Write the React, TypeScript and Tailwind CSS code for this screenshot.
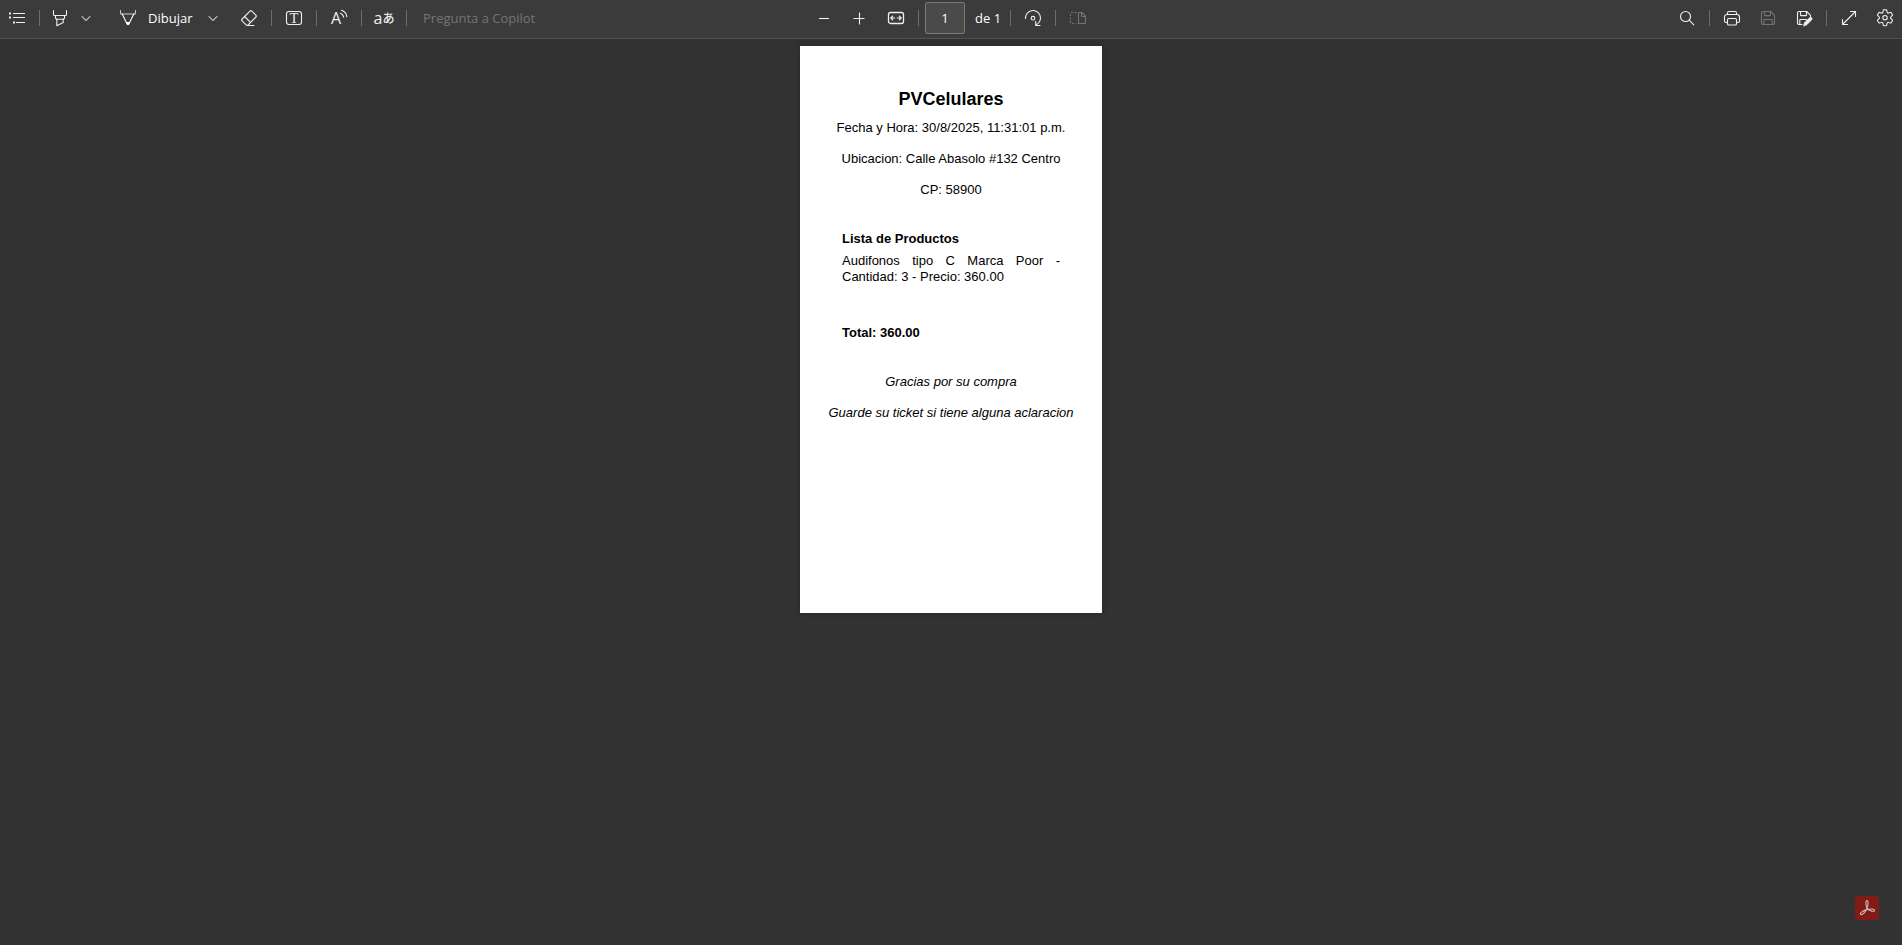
import { useState, type ReactNode } from "react";

function Icon({ children, className = "" }: { children: ReactNode; className?: string }) {
  return (
    <svg
      viewBox="0 0 18 18"
      fill="none"
      stroke="currentColor"
      strokeWidth="1.1"
      strokeLinecap="round"
      strokeLinejoin="round"
      aria-hidden="true"
      className={`size-[18px] shrink-0 overflow-visible ${className}`}
    >
      {children}
    </svg>
  );
}

function ToolButton({
  label,
  children,
  className = "w-8",
  disabled = false,
}: {
  label: string;
  children: ReactNode;
  className?: string;
  disabled?: boolean;
}) {
  return (
    <button
      type="button"
      aria-label={label}
      disabled={disabled}
      className={`flex h-8 shrink-0 items-center justify-center text-[#f0f0f0] disabled:text-[#747474] ${className}`}
    >
      {children}
    </button>
  );
}

function Separator() {
  return <span className="mx-1.5 h-4 w-px shrink-0 bg-[#6e6e6e]" />;
}

function Chevron() {
  return (
    <Icon className="text-[#b4b4b4]">
      <path d="M5 7.500l4 4 4-4" />
    </Icon>
  );
}

function FloppyShape() {
  return (
    <>
      <path d="M2.500 4A1.500 1.500 0 0 1 4 2.500h7.700l3.800 3.800V14a1.500 1.500 0 0 1-1.500 1.500H4A1.500 1.500 0 0 1 2.500 14z" />
      <path d="M5.500 2.500v3.500a.6.6 0 0 0 .6.6h4.800a.6.6 0 0 0 .6-.6V2.500M4.800 15.500v-4.400a.6.6 0 0 1 .6-.6h7.200a.6.6 0 0 1 .6.6v4.400" />
    </>
  );
}

function LeftTools() {
  return (
    <div className="flex items-center pl-px">
      <ToolButton label="Tabla de contenido">
        <Icon>
          <path d="M5 4.500h12M5 8.500h12M8 13.500h9" strokeLinecap="butt" />
          <path d="M1 4.500h2M1 8.500h2M5 13.500h2" strokeWidth="1.800" strokeLinecap="butt" />
        </Icon>
      </ToolButton>
      <Separator />
      <ToolButton label="Resaltar" className="w-7">
        <Icon>
          <path d="M2.500 1.500v4a1 1 0 0 0 1 1h11a1 1 0 0 0 1-1v-4" />
          <path d="M4.500 6.500v2.200a1.500 1.500 0 0 0 1.500 1.500h6a1.500 1.500 0 0 0 1.500-1.500V6.500" />
          <path d="M5.800 10.200v6.600l6.400-3.200v-3.400" />
        </Icon>
      </ToolButton>
      <ToolButton label="Opciones de resaltado" className="ml-0.5 w-5">
        <Chevron />
      </ToolButton>
      <button
        type="button"
        className="ml-4 flex h-8 w-[91px] items-center gap-3 pl-[7px] text-[13px] leading-4 font-medium text-white"
      >
        <Icon className="-mr-px">
          <path d="M1.500 1.500v2.800a.7.7 0 0 0 .7.7h13.600a.7.7 0 0 0 .7-.7V1.500" strokeOpacity=".75" />
          <path d="M3.200 5l4.900 9.900a1 1 0 0 0 1.800 0L14.800 5" />
          <path d="M7 13h4l-1.100 2.500a1 1 0 0 1-1.800 0z" fill="currentColor" stroke="none" />
        </Icon>
        <span>Dibujar</span>
      </button>
      <ToolButton label="Opciones de dibujo" className="w-5">
        <Chevron />
      </ToolButton>
      <ToolButton label="Borrar" className="ml-2.5 w-8">
        <Icon>
          <path d="M10 2.100a1.300 1.300 0 0 1 1.800 0l4.100 4.100a1.300 1.300 0 0 1 0 1.800l-7.700 7.800a1.500 1.500 0 0 1-2.100 0l-4-4a1.300 1.300 0 0 1 0-1.800z" />
          <path d="M4.600 7.500l5.900 5.900M7.500 16.500h6.500" />
        </Icon>
      </ToolButton>
      <Separator />
      <ToolButton label="Agregar texto">
        <Icon>
          <rect x="1.500" y="2.500" width="15" height="13" rx="2.500" />
          <text
            x="9"
            y="14"
            textAnchor="middle"
            fontSize="14"
            fill="currentColor"
            stroke="none"
            className="font-['Liberation_Serif',serif]"
          >
            T
          </text>
        </Icon>
      </ToolButton>
      <Separator />
      <ToolButton label="Leer en voz alta">
        <Icon>
          <text
            x="1"
            y="15"
            fontSize="16"
            fill="currentColor"
            stroke="none"
            className="font-['Open_Sans',sans-serif]"
          >
            A
          </text>
          <path d="M10.500 4.200c1.700.7 2.900 2 3.200 4M11.500 1.300c3 1 4.900 3.300 5.300 6.300" />
        </Icon>
      </ToolButton>
      <Separator />
      <ToolButton label="Traducir">
        <span className="flex items-center leading-4">
          <span className="font-['Open_Sans',sans-serif] text-[16px]">a</span>
          <span className="font-['Noto_Sans_CJK_JP',sans-serif] text-[12px] font-medium">あ</span>
        </span>
      </ToolButton>
      <Separator />
      <input
        type="text"
        aria-label="Pregunta a Copilot"
        placeholder="Pregunta a Copilot"
        className="ml-2.5 h-8 w-40 min-w-0 bg-transparent text-[13px] text-white outline-none placeholder:text-[#747474]"
      />
    </div>
  );
}

function CenterTools() {
  const [page, setPage] = useState("1");
  return (
    <div className="flex items-center">
      <ToolButton label="Alejar">
        <Icon>
          <path d="M4 9.500h10" strokeLinecap="butt" />
        </Icon>
      </ToolButton>
      <ToolButton label="Acercar" className="ml-[3px] w-8">
        <Icon>
          <path d="M3.500 9.500h11M9.500 3.500v12" strokeLinecap="butt" />
        </Icon>
      </ToolButton>
      <ToolButton label="Ajustar al ancho" className="ml-[5px] w-8">
        <Icon>
          <rect x="1.500" y="3.500" width="15" height="11" rx="2" strokeWidth="1.300" />
          <path d="M3.800 9h3.900M10.300 9h3.900M5.700 7.100L3.800 9l1.900 1.900M12.300 7.100L14.200 9l-1.900 1.900" strokeWidth="1.200" />
        </Icon>
      </ToolButton>
      <Separator />
      <input
        type="text"
        aria-label="Número de página"
        value={page}
        onChange={(e) => setPage(e.target.value)}
        className="h-8 w-10 rounded-xs border border-[#7a7a7a] bg-[#4a4a4a] text-center text-[13px] text-white outline-none"
      />
      <span className="ml-2.5 w-[29px] text-[13px] leading-4 whitespace-nowrap text-white">de 1</span>
      <Separator />
      <ToolButton label="Girar">
        <Icon>
          <path d="M1.500 9.500A7.500 7.500 0 1 1 12.600 15.600" />
          <path d="M11.700 12.200v4.300h4.300" />
          <circle cx="9" cy="9.200" r="1.800" />
        </Icon>
      </ToolButton>
      <Separator />
      <ToolButton label="Vista de página" disabled>
        <Icon>
          <path d="M9.500 3.500h3.300l3.700 3.700v6.300a1 1 0 0 1-1 1h-6z" />
          <path d="M12.500 3.500v3a1 1 0 0 0 1 1h3" />
          <path
            d="M7.500 3.500h-5a1 1 0 0 0-1 1v9a1 1 0 0 0 1 1h5"
            strokeDasharray="2 1.500"
            strokeLinecap="butt"
          />
        </Icon>
      </ToolButton>
    </div>
  );
}

function RightTools() {
  return (
    <div className="flex items-center justify-end pr-px">
      <ToolButton label="Buscar">
        <Icon>
          <circle cx="7.500" cy="7.500" r="5" />
          <path d="M11.200 11.200l4.600 4.600" />
        </Icon>
      </ToolButton>
      <Separator />
      <ToolButton label="Imprimir">
        <Icon>
          <path d="M4.500 13.500H3A1.500 1.500 0 0 1 1.500 12V8A2.500 2.500 0 0 1 4 5.500h10A2.500 2.500 0 0 1 16.500 8v4a1.500 1.500 0 0 1-1.500 1.500h-1.500" />
          <path d="M4.500 5.500V4A1.500 1.500 0 0 1 6 2.500h6A1.500 1.500 0 0 1 13.500 4v1.500" />
          <rect x="4.500" y="9.500" width="9" height="6.500" rx="1.300" />
        </Icon>
      </ToolButton>
      <ToolButton label="Guardar" disabled className="ml-1 w-8">
        <Icon>
          <FloppyShape />
        </Icon>
      </ToolButton>
      <ToolButton label="Guardar como" className="ml-1 w-8">
        <Icon>
          <path d="M7 15.500H4A1.500 1.500 0 0 1 2.500 14V4A1.500 1.500 0 0 1 4 2.500h7.700l3.800 3.800V8" />
          <path d="M5.500 2.500v3.500a.6.6 0 0 0 .6.6h4.800a.6.6 0 0 0 .6-.6V2.500M4.800 15.500v-4.400a.6.6 0 0 1 .6-.6h6" />
          <path
            d="M8.500 16.800l.8-3 5.200-5.100a1.500 1.500 0 0 1 2.200 2.200l-5.200 5.100z"
            fill="currentColor"
            strokeWidth=".6"
          />
        </Icon>
      </ToolButton>
      <Separator />
      <ToolButton label="Pantalla completa">
        <Icon>
          <path d="M2.500 15.500l13-13M10.500 2.500h5v5M2.500 10.500v5h5" />
        </Icon>
      </ToolButton>
      <ToolButton label="Configuración" className="ml-1 w-8">
        <Icon>
          <path d="M7.400.9Q9 .5 10.600.9L11.100 3.100a1.200 1.200 0 0 0 1.600.9l2.100-.7q1.300 1.200 1.800 2.900l-1.700 1.600a1.200 1.200 0 0 0 0 1.800l1.700 1.600q-.5 1.700-1.800 2.900l-2.100-.7a1.200 1.200 0 0 0-1.600.9l-.5 2.200q-1.600.4-3.200 0L6.900 14.300a1.200 1.200 0 0 0-1.600-.9l-2.100.7q-1.300-1.200-1.800-2.900l1.700-1.600a1.200 1.200 0 0 0 0-1.800L1.400 6.200q.5-1.700 1.800-2.900l2.100.7A1.200 1.200 0 0 0 6.900 3.100z" />
          <circle cx="9" cy="8.700" r="2.200" />
        </Icon>
      </ToolButton>
    </div>
  );
}

function Receipt() {
  return (
    <article className="min-h-[567px] w-[302px] bg-white pt-[43px] pb-10 text-center font-['Liberation_Sans',Arial,sans-serif] text-[13px] leading-4 text-black shadow-[0_0_6px_rgba(0,0,0,0.25)]">
      <h1 className="text-[18px] leading-5 font-bold">PVCelulares</h1>
      <div className="mt-[11px] flex flex-col gap-[15px]">
        <p>Fecha y Hora: 30/8/2025, 11:31:01 p.m.</p>
        <p>Ubicacion: Calle Abasolo #132 Centro</p>
        <p>CP: 58900</p>
      </div>
      <section className="mt-[33px] px-[42px] text-left">
        <h2 className="font-bold">Lista de Productos</h2>
        <p className="mt-1.5 text-justify">Audifonos tipo C Marca Poor - Cantidad: 3 - Precio: 360.00</p>
        <p className="mt-10 font-bold">Total: 360.00</p>
      </section>
      <div className="mt-[33px] flex flex-col gap-[15px] italic">
        <p>Gracias por su compra</p>
        <p>Guarde su ticket si tiene alguna aclaracion</p>
      </div>
    </article>
  );
}

function AcrobatButton() {
  return (
    <button
      type="button"
      aria-label="Abrir en Acrobat"
      className="fixed right-[23px] bottom-[25px] flex size-6 items-center justify-center rounded bg-[#821a16] text-[#cdbcbb]"
    >
      <Icon>
        <path d="M9 9.300C7.700 6 7.500 1.500 9 1.500s1.300 4.500 0 7.800c-1.500 3.500-4.500 7.200-6.200 6.300-1.800-1 2-3.900 6-5 4-1 7.700-.9 7.700.8 0 1.800-4.800.8-7.500-2.100z" />
      </Icon>
    </button>
  );
}

export default function App() {
  return (
    <div className="flex min-h-screen flex-col bg-[#323232] font-['Open_Sans','Noto_Sans',sans-serif]">
      <header className="grid h-[39px] grid-cols-[1fr_auto_1fr] items-center border-b border-[#525252] bg-[#3b3b3b] pb-0.5">
        <LeftTools />
        <CenterTools />
        <RightTools />
      </header>
      <main className="flex flex-1 items-start justify-center pt-[7px]">
        <Receipt />
      </main>
      <AcrobatButton />
    </div>
  );
}
